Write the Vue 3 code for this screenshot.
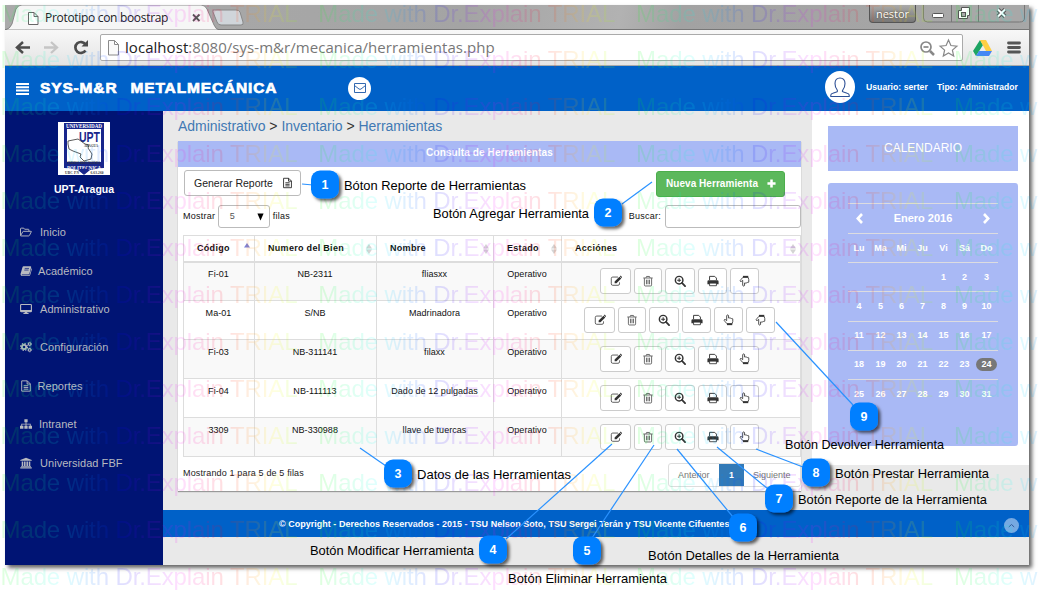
<script setup>
const menu = [
  { icon: 'folder', label: 'Inicio', gap: 8 },
  { icon: 'book', label: 'Académico', gap: 6 },
  { icon: 'monitor', label: 'Administrativo', gap: 8 },
  { icon: 'cogs', label: 'Configuración', gap: 8 },
  { icon: 'file', label: 'Reportes', gap: 5.5 },
  { icon: 'sitemap', label: 'Intranet', gap: 7 },
  { icon: 'bank', label: 'Universidad FBF', gap: 8 },
]
const heads = ['Código', 'Numero del Bien', 'Nombre', 'Estado', 'Acciónes']
const base = ['edit', 'trash', 'zoom', 'print']
const rows = [
  { cells: ['Fi-01', 'NB-2311', 'fliasxx', 'Operativo'], acts: [...base, 'down'] },
  { cells: ['Ma-01', 'S/NB', 'Madrinadora', 'Operativo'], acts: [...base, 'up', 'down'] },
  { cells: ['Fi-03', 'NB-311141', 'filaxx', 'Operativo'], acts: [...base, 'up'] },
  { cells: ['Fi-04', 'NB-111113', 'Dado de 12 pulgadas', 'Operativo'], acts: [...base, 'up'] },
  { cells: ['3309', 'NB-330988', 'llave de tuercas', 'Operativo'], acts: [...base, 'up'] },
]
const weekdays = ['Lu', 'Ma', 'Mi', 'Ju', 'Vi', 'Sá', 'Do']
const weeks = [0, 1, 2, 3, 4].map((w) => [0, 1, 2, 3, 4, 5, 6].map((d) => w * 7 + d - 3))
const marks = []
for (let r = 0; r < 13; r++) for (let c = 0; c < 4; c++) marks.push({ x: 0.5 + c * 317.8, y: 21.5 + r * 46.96 })
const notes = [
  { n: 1, x: 311, y: 170.5, tx: 344, ty: 190, w: 182, t: 'Bóton Reporte de Herramientas', l: [302, 184, 313, 185] },
  { n: 2, x: 594, y: 198.5, tx: 433, ty: 218, w: 156, t: 'Botón Agregar Herramienta', l: [622, 204, 652, 182] },
  { n: 3, x: 384, y: 459.5, tx: 417, ty: 479, w: 154, t: 'Datos de las Herramientas', l: [360, 448, 386, 466] },
  { n: 4, x: 479, y: 535.5, tx: 310, ty: 555, w: 164, t: 'Botón Modificar Herramienta', l: [506, 539, 612, 444] },
  { n: 5, x: 573, y: 536.5, tx: 508, ty: 583, w: 159, t: 'Botón Eliminar Herramienta', l: [592, 538, 654, 445] },
  { n: 6, x: 729, y: 513.5, tx: 648, ty: 560, w: 191, t: 'Botón Detalles de la Herramienta', l: [733, 517, 677, 449] },
  { n: 7, x: 765, y: 484.5, tx: 798, ty: 504, w: 189, t: 'Botón Reporte de la Herramienta', l: [768, 489, 717, 447] },
  { n: 8, x: 802, y: 458.5, tx: 835, ty: 478, w: 154, t: 'Botón Prestar Herramienta', l: [803, 467, 756, 449] },
  { n: 9, x: 850, y: 402.5, tx: 785, ty: 449, w: 159, t: 'Botón Devolver Herramienta', l: [853, 405, 776, 322] },
]
</script>

<template>
  <div class="stage">
    <svg class="defs" width="0" height="0">
      <symbol id="folder" viewBox="0 0 14 14"><path d="M.6 11V3.3q0-.8.8-.8h3l1 1.3h4.2q.8 0 .8.8v1.6M.7 11.3l2.6-4.7q.2-.4.7-.4h8.8q.6 0 .4.5l-2.2 4.3q-.3.6-.9.6H1.2q-.8 0-.5-.3z" fill="none" stroke="currentColor" stroke-width="1.1"/></symbol>
      <symbol id="book" viewBox="0 0 14 14"><path d="M4.2 1.6h8q1.1.1.8 1.2l-2 7.2q-.3 1-1.3 1H2.4q-.8.5 0 .9h7.8q.8 0 1-.8l2.2-7.3q.8.4.5 1.3l-2 6.6q-.4 1.2-1.6 1.2H2Q.4 12.4.6 10.5l2.2-7.600q.4-1.300 1.400-1.300z" fill="currentColor"/><path d="M5.500 4h5M5 5.900h5" stroke="#001474" stroke-width=".8"/></symbol>
      <symbol id="monitor" viewBox="0 0 14 14"><rect x=".7" y="1.700" width="12.600" height="8.300" rx=".8" fill="none" stroke="currentColor" stroke-width="1.300"/><path d="M.7 8.300h12.600v2H.7zM5.500 10h3v1.800h1.500v1H4v-1h1.500z" fill="currentColor"/></symbol>
      <symbol id="cogs" viewBox="0 0 14 14"><g fill="none" stroke="currentColor"><circle cx="4.700" cy="7" r="2.500" stroke-width="2"/><circle cx="4.700" cy="7" r="4" stroke-width="1.300" stroke-dasharray="1.700 1.440"/><circle cx="11.300" cy="3.600" r="1.500" stroke-width="1.200"/><circle cx="11.300" cy="3.600" r="2.400" stroke-width=".8" stroke-dasharray="1.200 1.310"/><circle cx="11.300" cy="10.400" r="1.500" stroke-width="1.200"/><circle cx="11.300" cy="10.400" r="2.400" stroke-width=".8" stroke-dasharray="1.200 1.310"/></g></symbol>
      <symbol id="file" viewBox="0 0 14 14"><path d="M2 1h6.500L12 4.500V13H2zM8.300 1v3.700H12M4.300 6.700h5.400M4.300 8.700h5.400M4.300 10.700h5.400" fill="none" stroke="currentColor" stroke-width="1.100"/></symbol>
      <symbol id="sitemap" viewBox="0 0 14 14"><path d="M5.100 1.500h3.800v3.600H7.500v1.500h5V9H14v3.500h-4V9h1.500V7.600h-4V9h1.400v3.500H5.100V9h1.400V7.600h-4V9H4v3.500H0V9h1.500V6.600h5V5.100H5.100z" fill="currentColor"/></symbol>
      <symbol id="bank" viewBox="0 0 14 14"><path d="M7 .8l6.700 2.700v1H.3v-1zM2 5.300h1.800v5.200H2zM4.700 5.300h1.800v5.200H4.700zM7.500 5.300h1.800v5.200H7.500zM10.200 5.300H12v5.200h-1.800zM1.200 10.800h11.600v.9H1.200zM.3 12.100h13.400v1.200H.3z" fill="currentColor"/></symbol>
      <symbol id="edit" viewBox="0 0 14 14"><path d="M9.300 2.400H3.200Q1.500 2.400 1.500 4.100v6.200q0 1.700 1.700 1.700h6.200q1.700 0 1.700-1.700V8.600" fill="none" stroke="currentColor" stroke-width=".9"/><path d="M5.400 9.700V7.500l5.600-5.600 2.200 2.200-5.600 5.600zM11.400 1.500l.6-.5q.4-.3.800 0l1.100 1.200q.4.400 0 .8l-.5.500z" fill="currentColor"/></symbol>
      <symbol id="trash" viewBox="0 0 14 14"><path d="M1.500 3.500h11M4.700 3.300l.6-1.600h3.400l.6 1.600M2.800 3.700v7.800q0 1.300 1 1.300h6.400q1 0 1-1.300V3.700M5.200 5.500v5.300M7 5.500v5.300M8.800 5.500v5.300" fill="none" stroke="currentColor" stroke-width="1"/></symbol>
      <symbol id="zoom" viewBox="0 0 14 14"><circle cx="6" cy="6" r="4.400" fill="none" stroke="currentColor" stroke-width="1.700"/><path d="M9.300 9.300l3.600 3.600" stroke="currentColor" stroke-width="2.100" stroke-linecap="round"/><path d="M6 3.700v4.600M3.700 6h4.600" stroke="currentColor" stroke-width="1.200"/></symbol>
      <symbol id="print" viewBox="0 0 14 14"><path d="M3 6V1.600h6l2 2V6" fill="none" stroke="currentColor" stroke-width="1.100"/><path d="M.5 7.700q0-1.700 1.500-1.700h10q1.500 0 1.500 1.700v3.200h-2.300V9.500H2.800v1.400H.5z" fill="currentColor"/><path d="M3 9.300h8v3.200H3z" fill="none" stroke="currentColor" stroke-width="1"/></symbol>
      <symbol id="hand" viewBox="0 0 14 14"><path d="M4.300 7.800L2.700 6.500Q1.500 6 1.300 7.100c0 .6.500 1 1 1.600l2.300 2.600h6l.8-2.600V5.700q-.6-1-1.600-.4-.6-.9-1.700-.3-.7-.9-1.600-.3V2q-.4-1.200-1.300-.9-.9.200-.9 1.200z" fill="none" stroke="currentColor" stroke-width="1"/><path d="M4.600 11h6.200v2H4.600z" fill="currentColor"/></symbol>
    </svg>

    <div class="window">
      <div class="tabs">
        <svg class="tabshape" width="245" height="25" viewBox="0 0 245 25">
          <path d="M0 25Q5 24 7 19L11 4Q13 0 17 0h179q4 0 6 4l7 16q2 5 6 5z" fill="#f6f6f6" stroke="#777" stroke-width=".8"/>
          <path d="M208 7q-1-2 1-2h22q3 0 4 2l3 10q1 3-2 3h-20q-3 0-4-3z" fill="#d0d5da" stroke="#888"/>
          <path d="M23.500 7.500h5.500l4 4v8h-9.500zM29 7.500v4h4" fill="#fff" stroke="#666"/>
          <path d="M188 9.500l6.500 6.500m0-6.500l-6.500 6.500" stroke="#555" stroke-width="1.800"/>
        </svg>
        <span class="tabtitle">Prototipo con boostrap</span>
        <div class="wincontrols">
          <span class="person">nestor</span>
          <svg width="106" height="20" viewBox="0 0 106 20">
            <path d="M.5 0v13q0 4 4 4h92q5 0 5-4V0M28.500 0v17M55.500 0v17" fill="#aaa" fill-opacity=".55" stroke="#777"/>
            <rect x="9.500" y="8.500" width="11" height="4" rx="1" fill="#fff" stroke="#555"/>
            <path d="M38.500 2.500h8v8h-2v3h-9v-8h3z" fill="#fff" stroke="#555"/><rect x="38.500" y="7.500" width="4" height="4" fill="#aaa" stroke="#555"/>
            <path d="M75 4.500l7 7m0-7l-7 7" stroke="#555" stroke-width="4"/><path d="M75 4.500l7 7m0-7l-7 7" stroke="#fff" stroke-width="2"/>
          </svg>
        </div>
      </div>
      <div class="toolbar">
        <svg width="95" height="36" viewBox="0 0 95 36">
          <path d="M25 17.500H12m6-5.500l-6 5.500 6 5.500" fill="none" stroke="#4c4c4c" stroke-width="2.500"/>
          <path d="M39 17.500h13m-6-5.500l6 5.500-6 5.500" fill="none" stroke="#c5c5c5" stroke-width="2.300"/>
          <path d="M80.500 20.500a5.500 5.500 0 1 1 0-6" fill="none" stroke="#4c4c4c" stroke-width="2.700"/><path d="M83 10v6.500h-6.500z" fill="#4c4c4c"/>
        </svg>
        <div class="address">
          <svg width="18" height="20" viewBox="0 0 18 20"><path d="M2.500 2.500h6l4 4v10.500h-10zM8.500 2.500v4h4" fill="#fafafa" stroke="#8a8a8a"/></svg>
          <span class="url"><b>localhost</b>:8080/sys-m&amp;r/mecanica/herramientas.php</span>
          <svg class="star" width="44" height="22" viewBox="0 0 44 22"><circle cx="8" cy="10" r="5" fill="none" stroke="#888" stroke-width="1.700"/><path d="M5.500 10h5" stroke="#777" stroke-width="1.500"/><path d="M12 14l4 4" stroke="#888" stroke-width="2.500"/><path d="M30.500 3l2.400 5.500 6 .6-4.500 4 1.300 5.900-5.200-3.100-5.200 3.100 1.300-5.900-4.500-4 6-.6z" fill="#fff" stroke="#888" stroke-width="1.200"/></svg>
        </div>
        <svg class="drive" width="58" height="30" viewBox="0 0 58 30">
          <path d="M10 7L3 18l3 5 7-11z" fill="#1da462"/><path d="M10 7h6l6 11h-6z" fill="#ffcf44"/><path d="M9 18h13l-3 5H6z" fill="#4688f4"/>
          <path d="M38.500 10h11M38.500 14.500h11M38.500 19h11" stroke="#555" stroke-width="2.800" stroke-linecap="round"/>
        </svg>
      </div>

      <header class="top">
        <svg width="13" height="12" viewBox="0 0 13 12"><path d="M0 1h13M0 4.300h13M0 7.600h13M0 11h13" stroke="#fff" stroke-width="2"/></svg>
        <span class="brand">SYS-M&amp;R</span><span class="brand second">METALMECÁNICA</span>
        <span class="mail"><svg width="12" height="10" viewBox="0 0 12 10"><path d="M.5.500h11v9H.5zM.5 2.500L5 6q1 .7 2 0l4.500-3.500" fill="none" stroke="#3269b0"/></svg></span>
        <span class="avatar"><svg width="20" height="21" viewBox="0 0 20 21"><path d="M.8 19.500v-1.300q0-1.500 2-2l3.700-1.200q1.400-.6.700-2C5.500 11 5 8.800 5 6.500 5 3 7 1 10 1s5 2 5 5.500c0 2.300-.5 4.500-2.200 6.500-.7 1.400-.7 1.400.7 2l3.700 1.200q2 .5 2 2v1.300z" fill="none" stroke="#2d4f95" stroke-width="1.100"/></svg></span>
        <span class="user">Usuario: serter</span><span class="role">Tipo: Administrador</span>
      </header>

      <div class="body">
        <aside>
          <svg class="logo" width="52" height="53" viewBox="0 0 52 53">
            <path d="M0 0h52v53H0z" fill="#fff"/><path d="M6 1h40v45q-11 0-16 5l-4 2-4-2q-5-5-16-5z" fill="#18268c"/>
            <path d="M9 7h34v33H9z" fill="#fff"/>
            <text x="26" y="5.800" font-size="5.500" textLength="36" lengthAdjust="spacingAndGlyphs" class="seal">UNIVERSIDAD</text>
            <text x="31.500" y="19.500" font-size="14" textLength="21" lengthAdjust="spacingAndGlyphs" class="upt">UPT</text>
            <path d="M10 19l10-2 7 5 4 1-1 3 4 6-1 5-7 2-4-4 1-3-8-3-4-2-1-5z" fill="#fff" stroke="#333" stroke-width=".8"/>
            <text x="33" y="25" font-size="4" textLength="14" lengthAdjust="spacingAndGlyphs" class="seal dark">ARAGUA</text>
            <text x="26" y="42" font-size="4" textLength="33" lengthAdjust="spacingAndGlyphs" class="seal dark">FEDERICO BRITO FIGUEROA</text>
            <text x="26" y="47.500" font-size="5.500" textLength="34" lengthAdjust="spacingAndGlyphs" class="seal">POLITECNICA</text>
            <path d="M6 48h14l6 5H6zM46 48H32l-6 5h20z" fill="#fff"/><path d="M21 47h10l-5 5z" fill="#18268c"/>
            <text x="14" y="52" font-size="3.500" textLength="14" class="seal dark">UBC PN</text><text x="39" y="52" font-size="3.500" textLength="13" class="seal dark">6.63.260</text>
          </svg>
          <strong>UPT-Aragua</strong>
          <nav>
            <div v-for="m in menu" :key="m.label" class="item">
              <svg width="12" height="12"><use :href="'#' + m.icon"/></svg>
              <span :style="{ marginLeft: m.gap + 'px' }">{{ m.label }}</span>
            </div>
          </nav>
        </aside>
        <div class="content">
          <div class="columns">
            <main>
              <div class="crumbs"><a>Administrativo</a> &gt; <a>Inventario</a> &gt; <a>Herramientas</a></div>
              <section class="panel">
                <h1>Consulta de Herramientas</h1>
                <div class="buttons">
                  <span class="report">Generar Reporte <svg width="11" height="12"><use href="#file"/></svg></span>
                  <span class="new">Nueva Herramienta <svg width="9" height="9" viewBox="0 0 10 10"><path d="M5 .5v9M.5 5h9" stroke="#fff" stroke-width="2.800"/></svg></span>
                </div>
                <div class="filters">
                  <span>Mostrar</span><span class="select"><i>5</i><svg width="7" height="8" viewBox="0 0 8 8"><path d="M.5 0h7L4 8z"/></svg></span><span>filas</span>
                  <span class="search">Buscar:</span><span class="input"></span>
                </div>
                <div class="table">
                  <div class="tr th">
                    <div v-for="(h, i) in heads" :key="h" class="cell"><span>{{ h }}</span>
                      <svg :class="{ first: i === 0 }" width="6" height="10" viewBox="0 0 6 10"><path d="M3 0l3 4.500H0z" :fill="i ? '#d4d4d4' : '#7b82da'"/><path v-if="i" d="M0 5.500h6L3 10z" fill="#d4d4d4"/></svg>
                    </div>
                  </div>
                  <div v-for="r in rows" :key="r.cells[0]" class="tr">
                    <div v-for="(c, i) in r.cells" :key="i" class="cell">{{ c }}</div>
                    <div class="cell acts">
                      <span v-for="a in r.acts" :key="a" :class="['act', a]"><svg width="12" height="12"><use :href="a === 'up' || a === 'down' ? '#hand' : '#' + a"/></svg></span>
                    </div>
                  </div>
                </div>
                <div class="pager">
                  <span>Mostrando 1 para 5 de 5 filas</span>
                  <div class="pages"><span class="prev">Anterior</span><b>1</b><span class="next">Siguiente</span></div>
                </div>
              </section>
            </main>
            <div class="right">
              <div class="caltitle">CALENDARIO</div>
              <div class="calendar">
                <div class="month">
                  <svg width="7" height="11" viewBox="0 0 7 11"><path d="M6 1L1.800 5.500 6 10" fill="none" stroke="#fff" stroke-width="2.600"/></svg>
                  <span>Enero 2016</span>
                  <svg width="7" height="11" viewBox="0 0 7 11"><path d="M1 1l4.200 4.500L1 10" fill="none" stroke="#fff" stroke-width="2.600"/></svg>
                </div>
                <div class="week names"><span v-for="d in weekdays" :key="d">{{ d }}</span></div>
                <div v-for="(w, i) in weeks" :key="i" class="week"><span v-for="d in w" :key="d" :class="{ today: d === 24 }">{{ d > 0 ? d : '' }}</span></div>
              </div>
            </div>
          </div>
          <footer>
            <span>© Copyright - Derechos Reservados - 2015 - TSU Nelson Soto, TSU Sergei Terán y TSU Vicente Cifuentes</span>
            <i><svg width="7" height="5" viewBox="0 0 7 5"><path d="M.8 4l2.700-2.500L6.200 4" fill="none" stroke="#345f9d"/></svg></i>
          </footer>
        </div>
      </div>
    </div>

    <svg class="overlay" width="1038" height="602" viewBox="0 0 1038 602">
      <defs>
        <linearGradient id="rainbow">
          <stop offset="0" stop-color="#0f0"/><stop offset=".2" stop-color="#0ff"/><stop offset=".4" stop-color="#00f"/>
          <stop offset=".6" stop-color="#f0f"/><stop offset=".76" stop-color="#f00"/><stop offset=".92" stop-color="#ff0"/><stop offset="1" stop-color="#8f0"/>
        </linearGradient>
        <filter id="drop" x="-30%" y="-30%" width="180%" height="180%"><feDropShadow dx="2.500" dy="2.500" stdDeviation="1.500" flood-opacity=".6"/></filter>
      </defs>
      <text v-for="(m, i) in marks" :key="i" :x="m.x" :y="m.y" textLength="297" class="mark">Made with Dr.Explain TRIAL</text>
      <line v-for="n in notes" :key="'l' + n.n" :x1="n.l[0]" :y1="n.l[1]" :x2="n.l[2]" :y2="n.l[3]" stroke="#2a92ff" stroke-width="1.200"/>
      <g v-for="n in notes" :key="n.n">
        <rect :x="n.x" :y="n.y" width="28" height="28" rx="9" fill="#007fff" filter="url(#drop)"/>
        <text :x="n.x + 14" :y="n.y + 18.500" class="num">{{ n.n }}</text>
        <text :x="n.tx" :y="n.ty" :textLength="n.w" lengthAdjust="spacingAndGlyphs" class="label">{{ n.t }}</text>
      </g>
    </svg>
  </div>
</template>

<style>
body { background: #fff; overflow: hidden; }
</style>

<style scoped>
* { box-sizing: border-box; }
.stage { position: relative; width: 1038px; height: 602px; padding: 5px 0 0 5px; font-family: "Liberation Sans", Arial, sans-serif; overflow: hidden; }
.defs { position: absolute; }
.window { width: 1024px; height: 560px; box-shadow: 3px 3px 4px rgba(0,0,0,.6); display: flex; flex-direction: column; }
.tabs { height: 25px; background: linear-gradient(100deg, #aaa, #a4a4a4 45%, #b2b2b2 60%, #a2a2a2 66%, #a7a7a7); border-bottom: 1px solid #777; display: flex; position: relative; }
.tabshape { position: absolute; left: 0; top: 0; }
.tabtitle { position: relative; margin: 4px 0 0 40px; font: 12px/17px "Open Sans", sans-serif; letter-spacing: -.31px; color: #222; }
.wincontrols { margin-left: auto; display: flex; }
.wincontrols svg { margin-left: 7px; }
.person { width: 47px; height: 18px; border: 1px solid #555; border-top: 0; border-radius: 0 0 4px 4px; background: linear-gradient(#aaa, #777); color: #fff; font: 11px/17px "Open Sans", sans-serif; text-align: center; text-shadow: 0 0 2px #333; }
.toolbar { height: 36px; background: linear-gradient(#f8f8f8, #e4e4e4); border-bottom: 1px solid #aaa; display: flex; }
.address { width: 863px; height: 27px; margin-top: 4px; border: 1px solid #aaa; border-radius: 2px; background: #fff; display: flex; align-items: center; padding-left: 5px; }
.url { margin: -2px 0 0 1px; font: 15px/20px "Open Sans", sans-serif; letter-spacing: .05px; color: #777; white-space: nowrap; }
.url b { font-weight: 400; color: #222; }
.star { margin-left: auto; }
.drive { margin: 3px 0 0 7px; }
.top { height: 45px; flex: none; background: #0061c8; display: flex; align-items: center; padding-left: 11px; color: #fff; }
.brand { width: 79px; font-weight: 700; font-size: 15.500px; letter-spacing: .85px; margin: -1px 0 0 11px; -webkit-text-stroke: .7px #fff; white-space: nowrap; }
.brand.second { width: 150px; margin-left: 11.500px; }
.mail { width: 23px; height: 23px; border-radius: 50%; background: #fff; display: flex; align-items: center; justify-content: center; margin: -1px 0 0 67.500px; }
.avatar { width: 30px; height: 32px; border-radius: 50%; background: #fff; display: flex; align-items: center; justify-content: center; margin: -3px 0 0 454px; }
.user { width: 62px; white-space: nowrap; font-weight: 700; font-size: 8.700px; margin: -4px 0 0 11px; }
.role { white-space: nowrap; font-weight: 700; font-size: 8.500px; margin: -4px 0 0 9px; }
.body { flex: 1; display: flex; min-height: 0; }
aside { width: 158px; background: #001474; display: flex; flex-direction: column; align-items: center; padding-top: 11px; }
.seal { font-family: "Liberation Serif", serif; font-weight: 700; fill: #fff; text-anchor: middle; }
.seal.dark { fill: #333; }
.upt { font-weight: 700; fill: #18268c; text-anchor: middle; }
aside strong { color: #fff; font-size: 10.500px; line-height: 13px; margin-top: 8px; }
nav { align-self: stretch; margin-top: 17px; }
.item { height: 38.400px; padding-left: 15px; display: flex; align-items: center; color: #b8bac0; font-size: 11px; letter-spacing: .04px; }
.content { flex: 1; background: #e9e9e9; }
.columns { display: flex; height: 399px; }
main { width: 649px; padding-left: 15px; }
.crumbs { height: 30px; line-height: 30px; font-size: 14px; letter-spacing: -.03px; color: #333; }
.crumbs a { color: #4179b4; }
.panel { width: 623px; height: 350px; background: #fff; box-shadow: 0 1px 1px #999; }
h1 { margin: 0; height: 26px; background: #a9b9f5; color: #fff; font-size: 10px; line-height: 23px; letter-spacing: .12px; text-align: center; }
.buttons { display: flex; justify-content: space-between; padding: 3px 16px 0 6px; height: 35px; }
.report { width: 117px; height: 26px; border: 1px solid #bbb; border-radius: 3px; font-size: 10.500px; color: #222; display: flex; align-items: center; padding-left: 9px; }
.report svg { margin-left: 9px; }
.new { width: 129px; height: 26px; background: #5cb85c; margin-top: 1px; border: 1px solid #4cae4c; border-radius: 3px; color: #fff; font-weight: 700; font-size: 10px; display: flex; align-items: center; padding: 0 0 2px 9px; letter-spacing: .05px; }
.new svg { margin-left: 9px; }
.filters { display: flex; height: 29px; padding: 2px 0 0 5px; font-size: 9px; letter-spacing: .25px; line-height: 25px; color: #111; }
.select { width: 52px; height: 23px; margin: 1px 3px 0 2.500px; border: 1px solid #bbb; border-radius: 3px; display: flex; align-items: center; padding-left: 11px; color: #555; }
.select i { font-style: normal; width: 27px; }
.select svg { fill: #000; }
.search { margin-left: auto; }
.input { width: 136px; height: 23px; margin: 1px 0 0 4px; border: 1px solid #bbb; border-radius: 3px; }
.table { margin: 4px 0 0 5px; width: 618px; border: solid #ddd; border-width: 1px 0 0 1px; font-size: 9px; color: #111; letter-spacing: .05px; }
.tr { height: 39px; display: grid; grid-template-columns: 71px 122px 117px 68px 239px; }
.tr:nth-child(even) { background: #f9f9f9; }
.cell { border-right: 1px solid #ddd; border-bottom: 1px solid #ddd; text-align: center; line-height: 25px; padding-right: 1px; }
.th { height: 26px; font-weight: 700; letter-spacing: .3px; }
.th .cell { border-bottom: 2px solid #ddd; display: flex; justify-content: space-between; padding: 0 4px 0 13px; align-items: center; }
.th svg.first { margin-bottom: 2px; }
.acts { display: flex; justify-content: center; gap: 3px; padding: 6px 3px 0 0; }
.act { width: 29px; height: 26px; background: #fff; border: 1px solid #ccc; border-radius: 3px; display: flex; align-items: center; justify-content: center; color: #333; padding-bottom: 1px; }
.act.edit { width: 31px; }
.act.trash { width: 28px; color: #555; }
.act.zoom { width: 30px; }
.act.down svg { transform: rotate(180deg) scaleX(-1); }
.pager { display: flex; justify-content: space-between; padding-left: 5px; margin-top: 6px; font-size: 9px; letter-spacing: .15px; line-height: 20px; color: #222; }
.pages { width: 133px; height: 24px; border: 1px solid #ddd; border-radius: 3px; display: flex; color: #777; line-height: 22px; letter-spacing: 0; }
.prev { width: 50px; padding-left: 9px; }
.pages b { width: 25px; background: #337ab7; color: #fff; text-align: center; }
.next { padding-left: 9px; }
.right { width: 217px; height: 354px; background: #fff; padding: 15px 0 0 16px; }
.caltitle { width: 190px; height: 45px; background: #a9b9f5; color: #fff; font-size: 12px; line-height: 44px; text-align: center; }
.calendar { width: 190px; height: 263px; margin-top: 12px; background: #a9b9f5; border-radius: 3px; padding: 20px 20px 0; color: #fff; font-weight: 700; font-size: 9px; }
.month { height: 30px; border-top: 1px solid #dcdce0; display: flex; align-items: center; justify-content: space-between; padding: 0 8px 1px; font-size: 11px; }
.week { height: 29.200px; border-top: 1px solid #dcdce0; display: grid; grid-template-columns: 22px 21px 21px 21px 21px 21px 23px; align-items: center; text-align: center; line-height: 13px; }
.today { background: #777; border-radius: 7px; margin: 0 1px; }
footer { height: 27px; background: #0061c8; color: #fff; display: flex; align-items: center; justify-content: space-between; padding: 0 10px 0 116px; font-weight: 700; font-size: 9px; letter-spacing: .02px; }
footer i { width: 15px; height: 15px; border-radius: 50%; background: #76a9e2; display: flex; align-items: center; justify-content: center; margin-top: 3px; }
.overlay { position: absolute; left: 0; top: 0; }
.mark { font-size: 24px; fill: url(#rainbow); opacity: .12; }
.num { fill: #fff; font-size: 12.500px; font-weight: 700; text-anchor: middle; }
.label { fill: #000; font-size: 13px; }
</style>
